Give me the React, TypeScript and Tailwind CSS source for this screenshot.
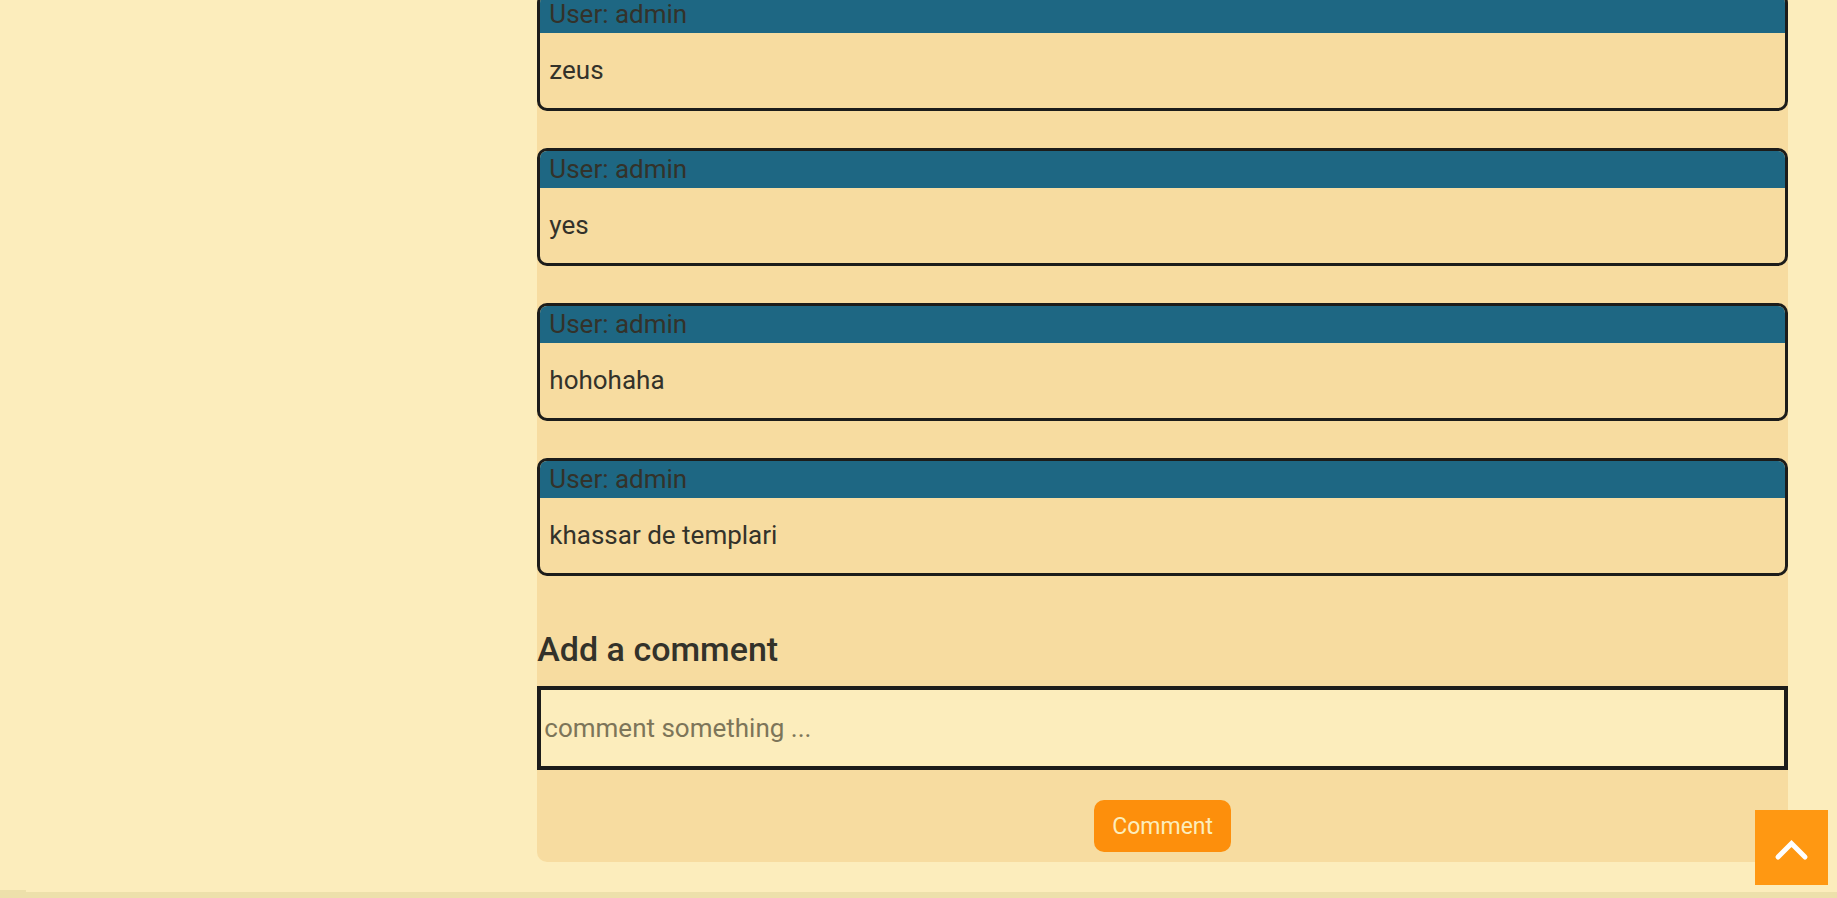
const comments = [
  { user: "admin", text: "zeus" },
  { user: "admin", text: "yes" },
  { user: "admin", text: "hohohaha" },
  { user: "admin", text: "khassar de templari" },
];

function CommentCard({ user, text }: { user: string; text: string }) {
  return (
    <article className="overflow-hidden rounded-[10px] border-3 border-[#1c1c1a]">
      <header className="bg-[#1e6783] px-[9px]">User: {user}</header>
      <p className="px-[9px] py-[19px]">{text}</p>
    </article>
  );
}

export default function App() {
  return (
    <div className="min-h-screen overflow-hidden bg-[#fcedbc] font-['Roboto',sans-serif] text-[26px] leading-[37px] text-[#33322a]">
      <main className="-mt-[7px] mr-[49px] ml-[29.25%] rounded-b-[10px] bg-[#f7dca0] pb-[10px]">
        <section className="flex flex-col gap-[37px]">
          {comments.map((comment) => (
            <CommentCard key={comment.text} user={comment.user} text={comment.text} />
          ))}
        </section>
        <form className="flex flex-col items-center pt-[53px]" onSubmit={(e) => e.preventDefault()}>
          <label htmlFor="comment" className="self-start text-[34px] leading-10 font-medium">
            Add a comment
          </label>
          <input
            id="comment"
            type="text"
            placeholder="comment something ..."
            className="mt-[17px] h-[84px] w-full border-4 border-[#1c1c1a] bg-[#fcedbc] px-[3px] outline-none placeholder:text-[#7d7559]"
          />
          <button type="submit" className="mt-[30px] h-[52px] rounded-[10px] bg-[#fd8f0c] px-[18px] text-[23px] text-[#fcedbc]">
            Comment
          </button>
        </form>
      </main>
      <footer className="mt-7 flex items-end">
        <div className="h-2 w-[26px] bg-[#ede0ab]" />
        <div className="h-[6px] flex-1 bg-[#ede0ab]" />
      </footer>
      <button
        type="button"
        aria-label="Back to top"
        className="fixed right-[9px] bottom-[13px] flex h-[75px] w-[73px] items-center justify-center bg-[#ff9812]"
      >
        <svg viewBox="0 0 73 75" className="h-full w-full" fill="none" stroke="#fff" strokeWidth="5" strokeLinecap="round">
          <path d="M23 47 36.500 33.500 50 47" />
        </svg>
      </button>
    </div>
  );
}
